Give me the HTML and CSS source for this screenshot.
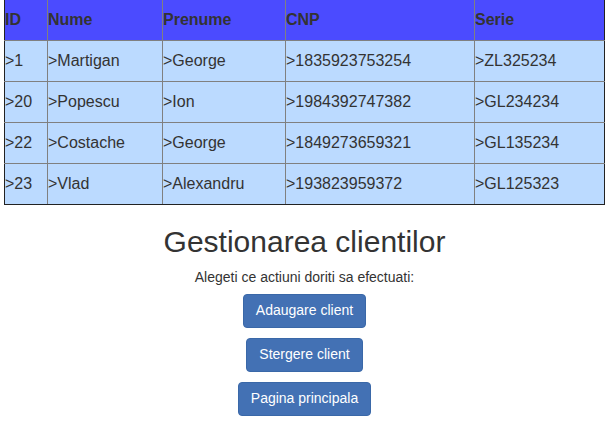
FILE: index.html
```html
<!DOCTYPE html>
<html>
<head>
<meta charset="utf-8">
<link rel="stylesheet" href="styles.css">
</head>
<body>
<div class="page">
  <table class="clients">
    <colgroup>
      <col class="c-id"><col class="c-nume"><col class="c-prenume"><col class="c-cnp"><col class="c-serie">
    </colgroup>
    <thead>
      <tr><th>ID</th><th>Nume</th><th>Prenume</th><th>CNP</th><th>Serie</th></tr>
    </thead>
    <tbody>
      <tr><td>&gt;1</td><td>&gt;Martigan</td><td>&gt;George</td><td>&gt;1835923753254</td><td>&gt;ZL325234</td></tr>
      <tr><td>&gt;20</td><td>&gt;Popescu</td><td>&gt;Ion</td><td>&gt;1984392747382</td><td>&gt;GL234234</td></tr>
      <tr><td>&gt;22</td><td>&gt;Costache</td><td>&gt;George</td><td>&gt;1849273659321</td><td>&gt;GL135234</td></tr>
      <tr><td>&gt;23</td><td>&gt;Vlad</td><td>&gt;Alexandru</td><td>&gt;193823959372</td><td>&gt;GL125323</td></tr>
    </tbody>
  </table>
  <div class="panel">
    <h1 class="title">Gestionarea clientilor</h1>
    <p class="lead">Alegeti ce actiuni doriti sa efectuati:</p>
    <div class="actions">
      <button class="btn">Adaugare client</button>
      <button class="btn">Stergere client</button>
      <button class="btn">Pagina principala</button>
    </div>
  </div>
</div>
</body>
</html>
```

FILE: styles.css
```css
html, body {
  margin: 0;
  padding: 0;
  background: #fff;
}
body {
  font-family: "Liberation Sans", Arial, sans-serif;
  font-size: 14px;
  line-height: 1.42857;
  color: #333;
}
.page {
  padding-left: 4px;
  width: 601px;
}
.clients {
  border-collapse: collapse;
  width: 600px;
  table-layout: fixed;
  border: 1px solid #222;
  border-top: none;
  font-size: 16px;
}
.c-id { width: 43px; }
.c-nume { width: 115px; }
.c-prenume { width: 123px; }
.c-cnp { width: 189px; }
.c-serie { width: 130px; }
.clients th, .clients td {
  border: 1px solid #808080;
  padding: 0;
  text-align: left;
  vertical-align: middle;
  white-space: nowrap;
}
.clients th {
  border-top: none;
  background: #4b4bff;
  font-weight: bold;
  height: 40px;
  color: #333;
}
.clients td {
  background: #bbdaff;
  height: 40px;
}
.clients tr:last-child td {
  border-bottom-color: #222;
}
.clients td:first-child, .clients th:first-child { border-left-color: #222; }
.clients td:last-child, .clients th:last-child { border-right-color: #222; }
.panel {
  text-align: center;
}
.title {
  font-size: 30px;
  font-weight: 500;
  line-height: 1.1;
  margin: 20px 0 10px;
}
.lead {
  margin: 0 0 6px;
}
.actions {
  display: flex;
  flex-direction: column;
  align-items: center;
  gap: 10px;
}
.btn {
  font-family: "Liberation Sans", Arial, sans-serif;
  font-size: 14px;
  line-height: 1.42857;
  padding: 6px 12px;
  border: 1px solid #3a68a8;
  border-radius: 4px;
  background: #4371b4;
  color: #fff;
}
```
